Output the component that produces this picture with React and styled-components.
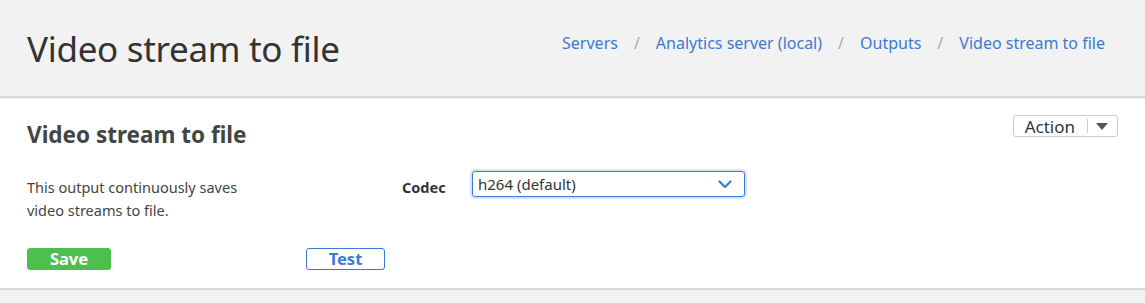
import React from "react";
import styled, { createGlobalStyle } from "styled-components";

const GlobalStyle = createGlobalStyle`
  body {
    margin: 0;
    background: #f2f2f2;
    font-family: "Noto Sans", "Open Sans", sans-serif;
    color: #333;
  }
`;

const Header = styled.div`
  display: flex;
  justify-content: space-between;
  align-items: center;
  height: 96px;
  padding: 0 40px 0 27px;
  border-bottom: 2px solid #d9d9d9;
`;

const PageTitle = styled.h1`
  margin: 0;
  font-size: 35px;
  font-weight: 400;
  color: #333;
  letter-spacing: -0.3px;
`;

const Breadcrumbs = styled.div`
  display: flex;
  align-items: center;
  gap: 16px;
  font-size: 16px;
  margin-top: -10px;
`;

const Crumb = styled.a`
  color: #3a7bd5;
  text-decoration: none;
`;

const Sep = styled.span`
  color: #aaa;
`;

const Panel = styled.div`
  background: #fff;
  margin-top: 1px;
  padding: 17px 27px 18px 27px;
  border-bottom: 2px solid #d9d9d9;
`;

const PanelTop = styled.div`
  display: flex;
  justify-content: space-between;
  align-items: flex-start;
`;

const PanelTitle = styled.h2`
  margin: 3px 0 0 0;
  font-size: 22.5px;
  font-weight: 700;
  color: #444;
`;

const ActionGroup = styled.div`
  box-sizing: border-box;
  display: flex;
  align-items: stretch;
  height: 22px;
  border: 1px solid #ccc;
  border-radius: 3px;
  margin-top: -1px;
`;

const ActionLabel = styled.span`
  display: flex;
  align-items: center;
  padding: 0 12px 0 11px;
  font-size: 17px;
  color: #333;
`;

const ActionCaret = styled.span`
  display: flex;
  align-items: center;
  padding: 0 9px 0 8px;
  border-left: 1px solid #ccc;
  margin: 3px 0;
`;

const Body = styled.div`
  display: grid;
  grid-template-columns: 358px 87px 273px;
  margin-top: 26px;
`;

const LeftCol = styled.div`
  display: flex;
  flex-direction: column;
`;

const Description = styled.p`
  margin: 0;
  font-size: 14.5px;
  line-height: 23px;
  color: #444;
  width: 240px;
`;

const ButtonRow = styled.div`
  display: flex;
  justify-content: space-between;
  margin-top: 26px;
`;

const Button = styled.button`
  box-sizing: border-box;
  height: 22px;
  width: ${(p) => p.$width}px;
  padding: 0;
  font-family: inherit;
  font-size: 16.5px;
  font-weight: 700;
  line-height: 1;
  border-radius: 3px;
  cursor: pointer;
  color: ${(p) => (p.$primary ? "#fff" : "#3a7bd5")};
  background: ${(p) => (p.$primary ? "#4cbf4c" : "#fff")};
  border: 1px solid ${(p) => (p.$primary ? "#4cbf4c" : "#3a7bd5")};
`;

const FieldLabel = styled.label`
  font-size: 14.5px;
  font-weight: 700;
  color: #333;
  padding-left: 17px;
  margin-top: 1px;
`;

const Select = styled.div`
  box-sizing: border-box;
  display: flex;
  align-items: center;
  justify-content: space-between;
  height: 26px;
  margin-top: -5px;
  padding: 0 12px 0 5px;
  border: 1px solid #3a7bd5;
  border-radius: 3px;
  box-shadow: 0 0 0 2px #d6e4f7;
  font-size: 15px;
  color: #333;
`;

export default function App() {
  return (
    <>
      <GlobalStyle />
      <Header>
        <PageTitle>Video stream to file</PageTitle>
        <Breadcrumbs>
          <Crumb>Servers</Crumb>
          <Sep>/</Sep>
          <Crumb>Analytics server (local)</Crumb>
          <Sep>/</Sep>
          <Crumb>Outputs</Crumb>
          <Sep>/</Sep>
          <Crumb>Video stream to file</Crumb>
        </Breadcrumbs>
      </Header>
      <Panel>
        <PanelTop>
          <PanelTitle>Video stream to file</PanelTitle>
          <ActionGroup>
            <ActionLabel>Action</ActionLabel>
            <ActionCaret>
              <svg width="12" height="7" viewBox="0 0 12 7">
                <path d="M0 0 L12 0 L6 7 Z" fill="#555" />
              </svg>
            </ActionCaret>
          </ActionGroup>
        </PanelTop>
        <Body>
          <LeftCol>
            <Description>
              This output continuously saves video streams to file.
            </Description>
            <ButtonRow>
              <Button $primary $width={84}>Save</Button>
              <Button $width={79}>Test</Button>
            </ButtonRow>
          </LeftCol>
          <FieldLabel>Codec</FieldLabel>
          <Select>
            <span>h264 (default)</span>
            <svg width="14" height="9" viewBox="0 0 14 9">
              <path d="M1.5 1.5 L7 7 L12.5 1.5" fill="none" stroke="#3a7bd5" strokeWidth="2.2" strokeLinecap="round" strokeLinejoin="round" />
            </svg>
          </Select>
        </Body>
      </Panel>
    </>
  );
}
